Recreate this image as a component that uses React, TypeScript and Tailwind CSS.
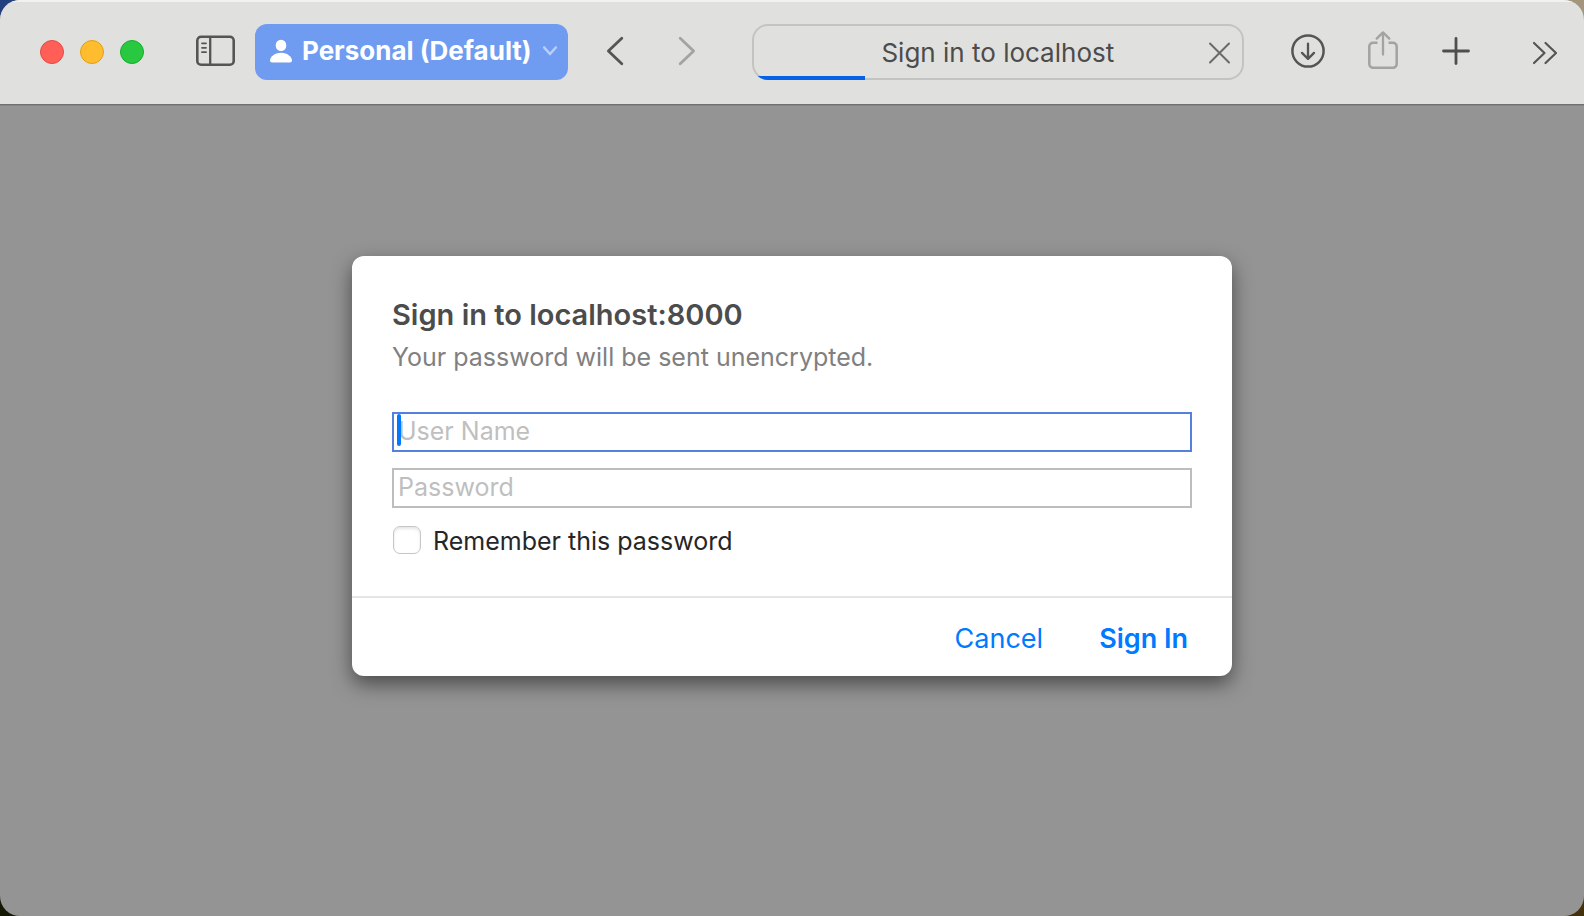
import { useState } from "react";

function TrafficLights() {
  return (
    <div className="flex shrink-0 gap-4">
      <button aria-label="Close window" className="size-6 rounded-full border border-[#e24b41] bg-[#ff5f57]" />
      <button aria-label="Minimize window" className="size-6 rounded-full border border-[#e1a116] bg-[#febc2e]" />
      <button aria-label="Zoom window" className="size-6 rounded-full border border-[#14ae2c] bg-[#28c840]" />
    </div>
  );
}

function SidebarIcon() {
  return (
    <svg width="40" height="32" viewBox="0 0 40 32" fill="none" stroke="#555554" strokeLinecap="round">
      <rect x="1.3" y="1.8" width="36.4" height="28" rx="3.8" strokeWidth="2.6" />
      <path d="M14.2 2V30" strokeWidth="2.3" strokeLinecap="butt" />
      <path d="M6 8.300h4M6 12.800h4M6 17.200h4" strokeWidth="1.8" />
    </svg>
  );
}

function PersonIcon() {
  return (
    <svg width="22" height="24" viewBox="0 0 22 24" fill="#fff">
      <ellipse cx="11" cy="6.4" rx="5.3" ry="5.7" />
      <path d="M2.2 23.6C.8 23.6 0 22.9 0 21.6 0 18.2 4.3 13.8 11 13.8s11 4.4 11 7.8c0 1.3-.8 2-2.2 2Z" />
    </svg>
  );
}

function DownloadIcon() {
  return (
    <svg width="34" height="34" viewBox="0 0 34 34" fill="none" stroke="#555554" strokeLinecap="round" strokeLinejoin="round">
      <circle cx="17" cy="17" r="15.6" strokeWidth="2.5" />
      <path d="M17 9.6V24.6M11 18.9l6 6 6-6" strokeWidth="2.3" />
    </svg>
  );
}

function ShareIcon() {
  return (
    <svg width="30" height="38" viewBox="0 0 30 38" fill="none" stroke="#a3a3a2" strokeLinecap="round" strokeLinejoin="round">
      <path d="M9.5 11.7H5a3.7 3.7 0 0 0-3.7 3.7v17.7A3.7 3.7 0 0 0 5 36.8h20a3.7 3.7 0 0 0 3.7-3.7V15.4a3.7 3.7 0 0 0-3.7-3.7h-4.5" strokeWidth="2.5" strokeLinecap="butt" />
      <path d="M15 23.5V1.8M8.7 7.6 15 1.4l6.300 6.200" strokeWidth="2.3" />
    </svg>
  );
}

function Toolbar() {
  return (
    <header className="flex h-[105px] shrink-0 items-center border-b border-[#707070] bg-[#e0e0de] pr-[26px] pl-10 shadow-[inset_0_2px_0_#f1f1f0,0_1px_0_#868686]">
      <TrafficLights />
      <button aria-label="Show sidebar" className="ml-[52px] shrink-0 pb-0.5">
        <SidebarIcon />
      </button>
      <button className="ml-[19px] flex h-14 shrink-0 items-center rounded-xl bg-[#6f9bf0] pr-[10px] pb-0.5 pl-[15px] text-[26px] leading-8 font-bold text-white">
        <PersonIcon />
        <span className="ml-[10px] whitespace-nowrap">Personal (Default)</span>
        <svg className="ml-[10px]" width="16" height="12" viewBox="0 0 16 12" fill="none" stroke="#b9cff9" strokeWidth="2.6" strokeLinecap="round" strokeLinejoin="round">
          <path d="M2.200 2.500 8 9l5.800-6.500" />
        </svg>
      </button>
      <button aria-label="Back" className="ml-[38px] shrink-0 pb-0.5">
        <svg width="18" height="30" viewBox="0 0 18 30" fill="none" stroke="#555554" strokeWidth="2.8" strokeLinecap="round" strokeLinejoin="round">
          <path d="M15.8 2.2 2.4 15l13.4 12.8" />
        </svg>
      </button>
      <button aria-label="Forward" className="ml-[54px] shrink-0 pb-0.5">
        <svg width="18" height="30" viewBox="0 0 18 30" fill="none" stroke="#a3a3a2" strokeWidth="2.8" strokeLinecap="round" strokeLinejoin="round">
          <path d="M2.2 2.2 15.6 15 2.2 27.8" />
        </svg>
      </button>
      <div className="relative ml-14 flex h-14 min-w-0 flex-1 items-center overflow-hidden rounded-2xl pt-0.5 pr-[13px] pl-9 shadow-[inset_0_0_0_2px_#c3c3c1]">
        <input
          aria-label="Address"
          defaultValue="Sign in to localhost"
          className="h-8 min-w-0 flex-1 bg-transparent text-center text-[26px] leading-8 text-[#4c4c4b] outline-none"
        />
        <button aria-label="Stop loading" className="shrink-0">
          <svg width="23" height="22" viewBox="0 0 23 22" fill="none" stroke="#6a6a69" strokeWidth="2" strokeLinecap="round">
            <path d="M2 1.5 21 20.5M21 1.5 2 20.5" />
          </svg>
        </button>
        <div role="progressbar" aria-label="Page loading" aria-valuenow={23} className="absolute bottom-0 left-0 h-1 w-[23%] bg-[#0662e2]" />
      </div>
      <button aria-label="Downloads" className="ml-[47px] shrink-0 pb-0.5">
        <DownloadIcon />
      </button>
      <button aria-label="Share" className="ml-[43px] shrink-0 pb-1">
        <ShareIcon />
      </button>
      <button aria-label="New tab" className="ml-11 shrink-0 pb-0.5">
        <svg width="28" height="28" viewBox="0 0 28 28" fill="none" stroke="#4f4f4e" strokeWidth="2.8" strokeLinecap="round">
          <path d="M14 1.5v25M1.5 14h25" />
        </svg>
      </button>
      <button aria-label="More toolbar items" className="ml-[62px] shrink-0 pt-0.5">
        <svg width="26" height="24" viewBox="0 0 26 24" fill="none" stroke="#555554" strokeWidth="2.2" strokeLinecap="round" strokeLinejoin="round">
          <path d="M2 2l10.5 10L2 22M13.5 2 24 12 13.5 22" />
        </svg>
      </button>
    </header>
  );
}

function SignInDialog() {
  const [user, setUser] = useState("");
  return (
    <form
      role="dialog"
      aria-labelledby="dialog-title"
      onSubmit={(e) => e.preventDefault()}
      className="w-full max-w-[880px] rounded-xl bg-white shadow-[0_8px_20px_rgba(0,0,0,0.5)]"
    >
      <div className="p-10">
        <h1 id="dialog-title" className="text-[29px] leading-[38px] font-semibold text-[#4c4c4c]">
          Sign in to localhost:8000
        </h1>
        <p className="mt-1 text-[25px] leading-[38px] text-[#808080]">Your password will be sent unencrypted.</p>
        <div className="relative mt-9">
          <input
            aria-label="User Name"
            placeholder="User Name"
            value={user}
            onChange={(e) => setUser(e.target.value)}
            className="block h-10 w-full border-2 border-[#5580dc] px-1 pb-0.5 text-[25px] leading-8 text-[#262626] caret-[#007aff] outline-none placeholder:text-[#bfbfbf]"
          />
          {user === "" && <span className="absolute top-[2px] left-[5px] h-8 w-1 rounded-sm bg-[#007aff]" />}
        </div>
        <input
          type="password"
          aria-label="Password"
          placeholder="Password"
          className="mt-4 block h-10 w-full border-2 border-[#bdbdbd] px-1 pb-0.5 text-[25px] leading-8 text-[#262626] outline-none placeholder:text-[#bfbfbf]"
        />
        <label className="mt-4 flex h-8 items-center gap-3 text-[25px] leading-8 text-[#262626]">
          <input
            type="checkbox"
            className="ml-px size-7 appearance-none rounded-[7px] border border-[#c6c6c6] bg-white shadow-[inset_0_2px_3px_rgba(0,0,0,0.1)] checked:bg-[#007aff]"
          />
          <span className="pt-0.5">Remember this password</span>
        </label>
      </div>
      <div className="flex h-20 items-center justify-end gap-14 border-t-2 border-[#e5e5e5] px-11 pt-1 text-[27px] leading-8 text-[#007aff]">
        <button type="button">Cancel</button>
        <button type="submit" className="font-semibold">
          Sign In
        </button>
      </div>
    </form>
  );
}

export default function App() {
  return (
    <div className="min-h-screen bg-[conic-gradient(from_0deg,#a3967c_0deg_90deg,#43300c_90deg_180deg,#141805_180deg_270deg,#23407e_270deg_360deg)] font-['Inter','Liberation_Sans',sans-serif]">
      <div className="flex min-h-screen flex-col overflow-hidden rounded-[20px] bg-[#949494]">
        <Toolbar />
        <main className="flex flex-1 items-start justify-center px-6 pt-[151px] pb-10">
          <SignInDialog />
        </main>
      </div>
    </div>
  );
}
